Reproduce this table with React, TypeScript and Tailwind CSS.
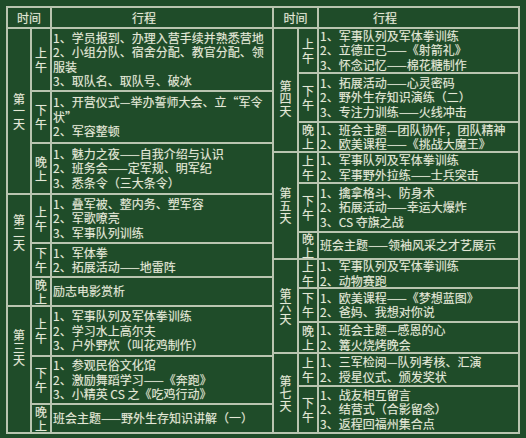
import React from "react";

type Period = { label: string; h: number; lines: string[] };
type Day = { label: string; h: number; labelPad?: string; periods: Period[] };

const leftDays: Day[] = [
  {
    label: "第一天",
    h: 166,
    periods: [
      {
        label: "上午",
        h: 61,
        lines: [
          "1、学员报到、办理入营手续并熟悉营地",
          "2、小组分队、宿舍分配、教官分配、领",
          "服装",
          "3、取队名、取队号、破冰",
        ],
      },
      { label: "下午", h: 52, lines: ["1、开营仪式—举办誓师大会、立“军令", "状”", "2、军容整顿"] },
      {
        label: "晚上",
        h: 51,
        lines: ["1、魅力之夜——自我介绍与认识", "2、班务会——定军规、明军纪", "3、悉条令（三大条令）"],
      },
    ],
  },
  {
    label: "第二天",
    h: 112,
    labelPad: "pb-[36px]",
    periods: [
      { label: "上午", h: 47, lines: ["1、叠军被、整内务、塑军容", "2、军歌嘹亮", "3、军事队列训练"] },
      { label: "下午", h: 34, lines: ["1、军体拳", "2、拓展活动——地雷阵"] },
      { label: "晚上", h: 29, lines: ["励志电影赏析"] },
    ],
  },
  {
    label: "第三天",
    h: 127,
    labelPad: "pb-[44px]",
    periods: [
      {
        label: "上午",
        h: 48,
        lines: ["1、军事队列及军体拳训练", "2、学习水上高尔夫", "3、户外野炊（叫花鸡制作）"],
      },
      {
        label: "下午",
        h: 48,
        lines: ["1、参观民俗文化馆", "2、激励舞蹈学习——《奔跑》", "3、小精英 CS 之《吃鸡行动》"],
      },
      { label: "晚上", h: 29, lines: ["班会主题——野外生存知识讲解（一）"] },
    ],
  },
];

const rightDays: Day[] = [
  {
    label: "第四天",
    h: 124,
    labelPad: "pt-[16px]",
    periods: [
      {
        label: "上午",
        h: 43,
        lines: ["1、军事队列及军体拳训练", "2、立德正己——《射箭礼》", "3、怀念记忆——棉花糖制作"],
      },
      {
        label: "下午",
        h: 49,
        lines: ["1、拓展活动——心灵密码", "2、野外生存知识演练（二）", "3、专注力训练——火线冲击"],
      },
      { label: "晚上", h: 30, lines: ["1、班会主题—团队协作，团队精神", "2、欧美课程——《挑战大魔王》"] },
    ],
  },
  {
    label: "第五天",
    h: 107,
    periods: [
      { label: "上午", h: 29, lines: ["1、军事队列及军体拳训练", "2、军事野外拉练——士兵突击"] },
      { label: "下午", h: 49, lines: ["1、擒拿格斗、防身术", "2、拓展活动——幸运大爆炸", "3、CS 夺旗之战"] },
      { label: "晚上", h: 27, lines: ["班会主题——领袖风采之才艺展示"] },
    ],
  },
  {
    label: "第六天",
    h: 94,
    periods: [
      { label: "上午", h: 27, lines: ["1、军事队列及军体拳训练", "2、动物赛跑"] },
      { label: "下午", h: 34, lines: ["1、欧美课程——《梦想蓝图》", "2、爸妈、我想对你说"] },
      { label: "晚上", h: 31, lines: ["1、班会主题—感恩的心", "2、篝火烧烤晚会"] },
    ],
  },
  {
    label: "第七天",
    h: 80,
    periods: [
      { label: "上午", h: 31, lines: ["1、三军检阅—队列考核、汇演", "2、授星仪式、颁发奖状"] },
      { label: "下午", h: 47, lines: ["1、战友相互留言", "2、结营式（合影留念）", "3、返程回福州集合点"] },
    ],
  },
];

// chalk line colour
const line = "border-[#b9c5b0]";

// vertical text: one block per character
function Stack({ text, cell }: { text: string; cell: string }) {
  return (
    <div className="flex flex-col items-center">
      {text.split("").map((c, i) => (
        <span key={i} className={`block ${cell} leading-[12px] flex items-center`}>
          {c}
        </span>
      ))}
    </div>
  );
}

function DayBlock({ day, dayW }: { day: Day; dayW: string }) {
  return (
    <div className={`flex border-t-2 ${line}`} style={{ height: day.h }}>
      <div className={`${dayW} shrink-0 flex items-center justify-center ${day.labelPad ?? ""}`}>
        <Stack text={day.label} cell="h-[12.5px]" />
      </div>
      <div className={`flex-1 flex flex-col border-l-2 ${line}`}>
        {day.periods.map((p, i) => (
          <div
            key={p.label}
            className={`flex shrink-0 ${i > 0 ? `border-t-2 ${line}` : ""}`}
            style={{ height: p.h }}
          >
            <div className="w-[18px] shrink-0 flex items-center justify-center">
              <Stack text={p.label} cell="h-[14px]" />
            </div>
            <div className={`flex-1 flex flex-col justify-center border-l-2 ${line} pl-[1px] whitespace-nowrap`}>
              {p.lines.map((l, j) => (
                <div key={j} className="h-[14.5px] leading-[14.5px]">
                  {l}
                </div>
              ))}
            </div>
          </div>
        ))}
      </div>
    </div>
  );
}

function Table({ days, side }: { days: Day[]; side: "left" | "right" }) {
  const isLeft = side === "left";
  return (
    <div
      className={`flex flex-col h-[428px] border-t-2 border-b-2 border-r-2 ${isLeft ? "border-l-2 w-[268px]" : "w-[246px]"} ${line}`}
    >
      <div className="flex h-[19px] shrink-0 items-center">
        <div className={`${isLeft ? "w-[42px]" : "w-[43px]"} shrink-0 text-center`}>时间</div>
        <div className={`flex-1 h-full flex items-center border-l-2 ${line} ${isLeft ? "pl-[80px]" : "pl-[54px]"}`}>
          行程
        </div>
      </div>
      {days.map((d) => (
        <DayBlock key={d.label} day={d} dayW={isLeft ? "w-[22px]" : "w-[23px]"} />
      ))}
    </div>
  );
}

export default function App() {
  return (
    <div
      className="w-[526px] h-[438px] bg-[#1f4c29] text-[#e5e9d7] text-[12px] pl-[6px] pt-[6px] flex overflow-hidden [text-shadow:0_0_1px_rgba(255,255,255,0.35)]"
      style={{ fontFamily: '"Noto Sans CJK SC", "Noto Sans", sans-serif' }}
    >
      <Table days={leftDays} side="left" />
      <Table days={rightDays} side="right" />
    </div>
  );
}
